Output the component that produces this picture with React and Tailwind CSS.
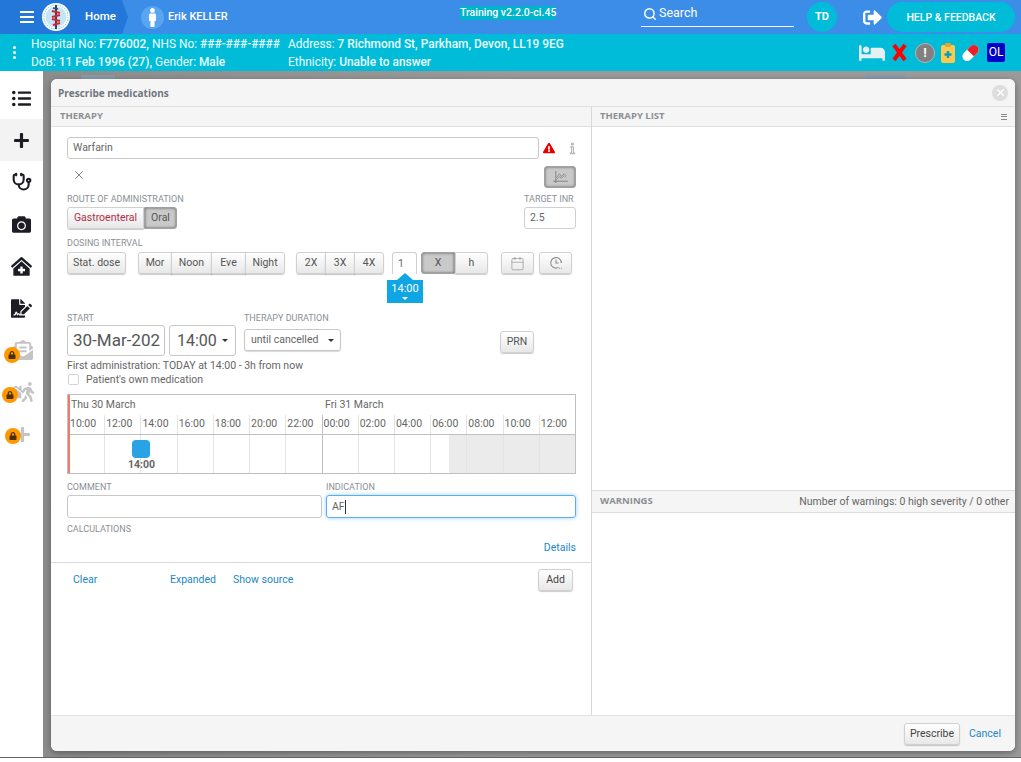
import { Calendar, Search, Stethoscope, X } from 'lucide-react';
import {
  FaBed,
  FaCamera,
  FaClinicMedical,
  FaEnvelopeOpenText,
  FaExclamationTriangle,
  FaFileSignature,
  FaHome,
  FaListUl,
  FaLock,
  FaMale,
  FaPlus,
  FaSignOutAlt,
  FaWalking,
} from 'react-icons/fa';

const hours = ['10:00', '12:00', '14:00', '16:00', '18:00', '20:00', '22:00', '00:00', '02:00', '04:00', '06:00', '08:00', '10:00', '12:00'];

function Label({ children, className = '' }) {
  return <div className={`whitespace-nowrap text-[9px] leading-[12px] text-[#8a8f96] ${className}`}>{children}</div>;
}

function Btn({ children, active, className = '' }) {
  const look = active
    ? 'bg-[#c9c9c9] border-[#a0a0a0] shadow-[inset_0_0_3px_rgba(0,0,0,0.55)]'
    : 'bg-gradient-to-b from-white to-[#e8e8e8] border-[#d0d0d0] shadow-[0_1px_1px_rgba(0,0,0,0.2)]';
  return (
    <div className={`flex h-[22px] items-center justify-center border text-[10.5px] text-[#555] ${look} ${className}`}>
      {children}
    </div>
  );
}

function Logo() {
  return (
    <svg viewBox="0 0 28 28" className="h-7 w-7 shrink-0">
      <circle cx="14" cy="14" r="14" fill="#fff" />
      <circle cx="14" cy="14" r="10.5" fill="#c5e6f5" />
      <circle cx="14" cy="14" r="12" fill="none" stroke="#7cc4e4" strokeWidth="1" strokeDasharray="1.5 1" />
      <rect x="13" y="2" width="2" height="24" fill="#27486e" />
      <path d="M10 8 L18 10 M18 12 L10 14 M10 16 L18 18 M18 20 L11 22" stroke="#d8232a" strokeWidth="2" fill="none" />
      <path d="M11 5 L16 6" stroke="#27486e" strokeWidth="1.5" />
    </svg>
  );
}

function Header() {
  return (
    <header className="flex h-[34px] shrink-0 items-center bg-[#3b8de8] font-['Roboto',sans-serif] text-white">
      <div className="flex h-full w-[128px] shrink-0 items-center bg-[#2377d8] pl-[20px] [clip-path:polygon(0_0,122px_0,128px_50%,122px_100%,0_100%)]">
        <div className="flex w-[14px] flex-col gap-[3px]">
          <span className="h-[2px] bg-white" />
          <span className="h-[2px] bg-white" />
          <span className="h-[2px] bg-white" />
        </div>
        <div className="ml-[8px]"><Logo /></div>
        <span className="ml-[15px] text-[11.5px] font-medium">Home</span>
      </div>
      <div className="ml-[13px] flex h-[23px] w-[23px] shrink-0 items-center justify-center rounded-full bg-[#5aa5f0]">
        <FaMale className="h-[19px] w-[19px]" />
      </div>
      <span className="ml-[4px] w-[292px] shrink-0 text-[11px] font-medium">Erik KELLER</span>
      <div className="mb-[8px] w-[95px] shrink-0">
        <span className="block h-[14px] whitespace-nowrap bg-[#00b4cc] text-[10.5px] font-medium leading-[14px]">Training v2.2.0-ci.45</span>
      </div>
      <div className="mb-[6px] ml-[86px] flex h-[25px] w-[153px] shrink-0 items-center border-b border-white pl-[2px]">
        <Search className="h-[14px] w-[14px]" strokeWidth={2.5} />
        <span className="ml-[2px] text-[12.5px]">Search</span>
      </div>
      <div className="ml-[13px] flex h-[30px] w-[30px] shrink-0 items-center justify-center rounded-full bg-[#00bcd9] text-[11px] font-bold">TD</div>
      <FaSignOutAlt className="ml-[26px] h-[19px] w-[19px] shrink-0" />
      <div className="ml-[5px] flex h-[30px] w-[128px] shrink-0 items-center justify-center rounded-full bg-[#00bcd9] pt-[1px] text-[10.5px] font-medium">HELP &amp; FEEDBACK</div>
    </header>
  );
}

function PatientBar() {
  return (
    <div className="flex h-[37px] shrink-0 items-center bg-[#00bcd9] font-['Roboto',sans-serif] text-[11.9px] leading-[18px] text-[#eafcff]">
      <div className="ml-[13px] flex w-[18px] shrink-0 flex-col gap-[2px]">
        <span className="h-[3px] w-[3px] rounded-full bg-white" />
        <span className="h-[3px] w-[3px] rounded-full bg-white" />
        <span className="h-[3px] w-[3px] rounded-full bg-white" />
      </div>
      <div className="w-[257px] shrink-0 whitespace-nowrap">
        <div>Hospital No: <b className="font-medium">F776002,</b> NHS No: <b className="font-medium">###-###-####</b></div>
        <div>DoB: <b className="font-medium">11 Feb 1996 (27),</b> Gender: <b className="font-medium">Male</b></div>
      </div>
      <div className="w-[571px] shrink-0 whitespace-nowrap">
        <div>Address: <b className="font-medium">7 Richmond St, Parkham, Devon, LL19 9EG</b></div>
        <div>Ethnicity: <b className="font-medium">Unable to answer</b></div>
      </div>
      <div className="flex items-center">
        <FaBed className="h-[24px] w-[26px] text-[#e6f0f7]" />
        <svg viewBox="0 0 15 17" className="ml-[7px] h-[17px] w-[15px]">
          <path d="M2 1 L13 16 M13 1 L2 16" stroke="#ff0000" strokeWidth="4" />
        </svg>
        <div className="ml-[8px] flex h-[20px] w-[20px] items-center justify-center rounded-full border border-[#b5b5b5] bg-[#808080] text-[13px] font-bold text-white">!</div>
        <svg viewBox="0 0 14 20" className="ml-[6px] h-[20px] w-[14px]">
          <rect x="0" y="2" width="14" height="18" rx="2" fill="#ffc94d" />
          <rect x="4" y="0" width="6" height="4" rx="1" fill="#e0a832" />
          <path d="M7 8 V15 M3.5 11.5 H10.5" stroke="#00a0c8" strokeWidth="2.4" />
        </svg>
        <svg viewBox="0 0 20 20" className="ml-[6px] h-[20px] w-[19px]">
          <g transform="rotate(-45 10 10)">
            <rect x="0" y="5" width="20" height="10" rx="5" fill="#fff" />
            <path d="M10 5 H15 A5 5 0 0 1 15 15 H10 Z" fill="#e8202a" />
          </g>
        </svg>
        <div className="mb-[1px] ml-[7px] flex h-[19px] w-[18px] items-center justify-center rounded-[2px] bg-[#0000c8] text-[12px] text-white">OL</div>
      </div>
    </div>
  );
}

function LockedIcon({ icon, lockClass }) {
  return (
    <div className="relative flex h-[42px] items-center justify-center text-[#c4c4c4]">
      {icon}
      <span className={`absolute flex h-[16px] w-[16px] items-center justify-center rounded-full bg-[#ff9800] text-[#4a3000] ${lockClass}`}>
        <FaLock className="h-[8px] w-[8px]" />
      </span>
    </div>
  );
}

function Sidebar() {
  const base = 'flex h-[42px] items-center justify-center text-[#1c1c24]';
  return (
    <nav className="flex w-[43px] shrink-0 flex-col bg-white pt-[6px]">
      <div className={base}><FaListUl className="h-[19px] w-[19px]" /></div>
      <div className={`${base} bg-[#f3f3f3]`}><FaPlus className="h-[17px] w-[17px]" /></div>
      <div className={base}><Stethoscope className="h-[20px] w-[20px]" strokeWidth={2.5} /></div>
      <div className={base}><FaCamera className="h-[19px] w-[19px]" /></div>
      <div className={base}><FaClinicMedical className="h-[19px] w-[21px]" /></div>
      <div className={base}><FaFileSignature className="h-[19px] w-[21px]" /></div>
      <LockedIcon icon={<FaEnvelopeOpenText className="ml-[2px] h-[20px] w-[20px]" />} lockClass="left-[4px] top-[18px]" />
      <LockedIcon
        icon={<span className="flex items-center"><FaHome className="h-[16px] w-[16px]" /><FaWalking className="-ml-[3px] h-[20px] w-[14px]" /></span>}
        lockClass="left-[2px] top-[16px]"
      />
      <LockedIcon icon={<FaPlus className="ml-[2px] h-[17px] w-[17px]" />} lockClass="left-[5px] top-[15px]" />
    </nav>
  );
}

function Timeline() {
  return (
    <div className="relative mt-[8px] h-[80px] w-[509px] border border-[#c0c0c0] text-[10.5px] text-[#666]">
      <div className="absolute bottom-0 left-0 top-0 w-[2px] bg-[#f07a6c]" />
      <div className="flex h-[20px] items-start pt-[1px]">
        <span className="w-[255px] pl-[3px] leading-[17px]">Thu 30 March</span>
        <span className="pl-[2px] leading-[17px]">Fri 31 March</span>
      </div>
      <div className="grid h-[20px] grid-cols-14 border-b border-[#c0c0c0]">
        {hours.map((h, i) => (
          <div key={i} className={`pl-[1px] leading-[18px] ${i === 0 ? 'pl-[2px]' : 'border-l'} ${i === 7 ? 'border-[#c0c0c0]' : 'border-[#e4e4e4]'}`}>{h}</div>
        ))}
      </div>
      <div className="grid h-[38px] grid-cols-14">
        {hours.map((h, i) => (
          <div key={i} className={`relative ${i === 0 ? '' : 'border-l'} ${i === 7 ? 'border-[#c0c0c0]' : 'border-[#e4e4e4]'} ${i > 10 ? 'bg-[#ebebeb]' : ''}`}>
            {i === 10 && <div className="absolute bottom-0 right-0 top-0 w-1/2 bg-[#ebebeb]" />}
            {i === 2 && (
              <>
                <div className="absolute -left-[9px] top-[5px] h-[18px] w-[18px] rounded-[4px] bg-[#29a3e6]" />
                <div className="absolute -left-[18px] top-[23px] w-[36px] text-center font-bold leading-[13px] text-[#666]">14:00</div>
              </>
            )}
          </div>
        ))}
      </div>
    </div>
  );
}

function TherapyForm() {
  return (
    <div className="flex w-[540px] shrink-0 flex-col">
      <div className="flex h-[20px] shrink-0 items-center border-b border-[#e0e0e0] bg-[#f5f5f5] pl-[9px] font-['Open_Sans',sans-serif] text-[9.5px] font-bold text-[#8a8f96]">THERAPY</div>
      <div className="flex-1 pl-[16px] pr-[15px] pt-[10px]">
        <div className="flex items-center">
          <div className="flex h-[22px] w-[472px] items-center rounded-[3px] border border-[#c8c8c8] pl-[5px] text-[10.5px] text-[#666]">Warfarin</div>
          <FaExclamationTriangle className="ml-[4px] h-[12px] w-[12px] text-[#e60000]" />
          <svg viewBox="0 0 8 14" className="ml-[14px] h-[13px] w-[7px]">
            <path d="M3 1 H5 V3 H3 Z M2 5 H5 V12 H6.5 V13 H1.5 V12 H3 V6 H2 Z" fill="none" stroke="#999" strokeWidth="0.9" />
          </svg>
        </div>
        <div className="mt-[7px] flex items-start justify-between">
          <X className="ml-[5px] mt-[2px] h-[14px] w-[14px] text-[#777]" strokeWidth={1.5} />
          <Btn active className="h-[22px] w-[32px] rounded-[3px]">
            <svg viewBox="0 0 16 14" className="h-[13px] w-[15px]" fill="none" stroke="#777" strokeWidth="0.9">
              <path d="M3 0 V13 M0 11 H16" />
              <path d="M4 7 L7 3 L9 6 L12 3 L14 5 M4 9 L7 6 L9 8 L12 5 L14 7" strokeWidth="0.7" />
            </svg>
          </Btn>
        </div>
        <div className="mt-[5px] flex justify-between">
          <div>
            <Label>ROUTE OF ADMINISTRATION</Label>
            <div className="mt-[2px] flex">
              <Btn className="w-[77px] rounded-l-[3px] !text-[#b0304a]">Gastroenteral</Btn>
              <Btn active className="w-[33px] rounded-r-[3px]">Oral</Btn>
            </div>
          </div>
          <div className="w-[52px]">
            <Label>TARGET INR</Label>
            <div className="mt-[2px] flex h-[22px] items-center rounded-[3px] border border-[#d0d0d0] pl-[5px] text-[10.5px] text-[#666]">2.5</div>
          </div>
        </div>
        <Label className="mt-[8px]">DOSING INTERVAL</Label>
        <div className="relative mt-[3px] flex items-center">
          <Btn className="w-[59px] rounded-[3px]">Stat. dose</Btn>
          <div className="ml-[12px] flex">
            <Btn className="w-[34px] rounded-l-[3px]">Mor</Btn>
            <Btn className="-ml-px w-[41px]">Noon</Btn>
            <Btn className="-ml-px w-[35px]">Eve</Btn>
            <Btn className="-ml-px w-[40px] rounded-r-[3px]">Night</Btn>
          </div>
          <div className="ml-[11px] flex">
            <Btn className="w-[30px] rounded-l-[3px]">2X</Btn>
            <Btn className="-ml-px w-[30px]">3X</Btn>
            <Btn className="-ml-px w-[30px] rounded-r-[3px]">4X</Btn>
          </div>
          <div className="ml-[8px] flex h-[22px] w-[25px] items-center rounded-t-[3px] border border-b-0 border-[#d0d0d0] pl-[5px] text-[10.5px] text-[#666]">1</div>
          <div className="ml-[4px] flex">
            <Btn active className="w-[34px] rounded-l-[3px]">X</Btn>
            <Btn className="w-[33px] rounded-r-[3px]">h</Btn>
          </div>
          <Btn className="ml-[13px] w-[33px] rounded-[3px]"><Calendar className="h-[15px] w-[15px] text-[#888]" strokeWidth={1} /></Btn>
          <Btn className="ml-[5px] w-[33px] rounded-[3px]">
            <svg viewBox="0 0 16 16" className="h-[14px] w-[14px]" fill="none" stroke="#888" strokeWidth="1.2">
              <path d="M11 13 A6 6 0 1 1 14 8" />
              <path d="M8 4 V8 H11" />
              <path d="M11.5 14 H12.5 M13.5 14 H14.5" />
            </svg>
          </Btn>
          {/* time bubble under the 1 field */}
          <div className="absolute left-[320px] top-[21px] flex h-[30px] w-[36px] flex-col items-center">
            <span className="h-0 w-0 border-x-[8px] border-b-[7px] border-x-transparent border-b-[#0fa6e3]" />
            <div className="flex h-[23px] w-[36px] flex-col items-center bg-[#0fa6e3] text-[11px] leading-[17px] text-white">
              14:00
              <span className="h-0 w-0 border-x-[3px] border-t-[3px] border-x-transparent border-t-white" />
            </div>
          </div>
        </div>
        <div className="mt-[38px] flex">
          <div>
            <Label>START</Label>
            <div className="mt-[1px] flex">
              <div className="flex h-[31px] w-[98px] items-center whitespace-nowrap rounded-[3px] border border-[#c8c8c8] pl-[5px] text-[17px] text-[#555]">30-Mar-202</div>
              <div className="ml-[4px] flex h-[31px] w-[67px] items-center rounded-[3px] border border-[#c8c8c8] pl-[7px] text-[16px] text-[#555]">
                14:00
                <span className="ml-[5px] h-0 w-0 border-x-[3px] border-t-[3px] border-x-transparent border-t-[#333]" />
              </div>
            </div>
          </div>
          <div className="ml-[8px]">
            <Label>THERAPY DURATION</Label>
            <div className="mt-[5px] flex h-[22px] w-[97px] items-center rounded-[3px] border border-[#c8c8c8] pl-[6px] text-[10.5px] text-[#666] shadow-[0_1px_1px_rgba(0,0,0,0.15)]">
              until cancelled
              <span className="ml-[10px] h-0 w-0 border-x-[3px] border-t-[3px] border-x-transparent border-t-[#333]" />
            </div>
          </div>
          <Btn className="ml-[159px] mt-[19px] w-[34px] rounded-[3px]">PRN</Btn>
        </div>
        <div className="mt-[3px] text-[10.5px] leading-[14px] text-[#666]">First administration: TODAY at 14:00 - 3h from now</div>
        <div className="flex items-center text-[10.5px] leading-[13px] text-[#666]">
          <span className="ml-[1px] h-[11px] w-[11px] rounded-[2px] border border-[#d4d4d4]" />
          <span className="ml-[7px]">Patient's own medication</span>
        </div>
        <Timeline />
        <div className="mt-[7px] flex gap-[4px]">
          <div className="w-[255px]">
            <Label>COMMENT</Label>
            <div className="mt-[2px] h-[23px] rounded-[3px] border border-[#c8c8c8]" />
          </div>
          <div className="w-[250px]">
            <Label>INDICATION</Label>
            <div className="mt-[2px] flex h-[23px] items-center rounded-[3px] border border-[#5aaef0] pl-[5px] text-[10.5px] text-[#666] shadow-[0_0_4px_rgba(90,174,240,0.6)]">
              AF<span className="h-[14px] w-px bg-[#333]" />
            </div>
          </div>
        </div>
        <Label className="mt-[5px]">CALCULATIONS</Label>
        <div className="mt-[6px] text-right text-[10.5px] leading-[14px] text-[#1b87c9]">Details</div>
      </div>
      <div className="flex h-[153px] shrink-0 items-start border-t border-[#dcdcdc] pl-[22px] pr-[18px] pt-[6px] text-[10.5px] text-[#1b87c9]">
        <span className="mt-[3px] w-[97px]">Clear</span>
        <span className="mt-[3px] w-[63px]">Expanded</span>
        <span className="mt-[3px]">Show source</span>
        <Btn className="ml-auto w-[35px] rounded-[3px] !text-[#444]">Add</Btn>
      </div>
    </div>
  );
}

function Modal() {
  return (
    <div className="relative flex h-[672px] flex-col overflow-hidden rounded-[6px] bg-white font-['Roboto',sans-serif] shadow-[0_2px_6px_rgba(0,0,0,0.35)]">
      <div className="flex h-[28px] shrink-0 items-center justify-between border-b border-[#e0e0e0] bg-[#f5f5f5] pl-[7px] pr-[7px]">
        <span className="pt-[1px] font-['Open_Sans',sans-serif] text-[10px] font-bold text-[#6f7680]">Prescribe medications</span>
        <span className="flex h-[16px] w-[16px] items-center justify-center rounded-full bg-[#dddddd]">
          <X className="h-[11px] w-[11px] text-white" strokeWidth={3} />
        </span>
      </div>
      <div className="flex min-h-0 flex-1">
        <TherapyForm />
        <div className="flex flex-1 flex-col border-l border-[#d8d8d8]">
          <div className="flex h-[20px] shrink-0 items-center justify-between border-b border-[#e0e0e0] bg-[#f5f5f5] pl-[8px] pr-[8px] font-['Open_Sans',sans-serif] text-[9.5px] font-bold text-[#8a8f96]">
            THERAPY LIST
            <span className="flex w-[6px] flex-col gap-[1.5px]">
              <span className="h-px bg-[#888]" />
              <span className="h-px bg-[#888]" />
              <span className="h-px bg-[#888]" />
            </span>
          </div>
          <div className="h-[363px] shrink-0" />
          <div className="flex h-[23px] shrink-0 items-center justify-between border-y border-[#dcdcdc] bg-[#f5f5f5] pl-[8px] pr-[6px]">
            <span className="font-['Open_Sans',sans-serif] text-[9.5px] font-bold text-[#8a8f96]">WARNINGS</span>
            <span className="text-[10.5px] text-[#666]">Number of warnings: 0 high severity / 0 other</span>
          </div>
        </div>
      </div>
      <div className="flex h-[36px] shrink-0 items-center justify-end border-t border-[#e4e4e4] bg-[#f5f5f5] pr-[15px] text-[10.5px]">
        <Btn className="w-[56px] rounded-[3px] !text-[#444]">Prescribe</Btn>
        <span className="ml-[9px] w-[31px] whitespace-nowrap text-[#1b87c9]">Cancel</span>
      </div>
    </div>
  );
}

export default function App() {
  return (
    <div className="flex h-[762px] w-[1021px] flex-col overflow-hidden bg-white">
      <Header />
      <PatientBar />
      <div className="flex min-h-0 flex-1">
        <Sidebar />
        <main className="relative flex-1 bg-gradient-to-r from-[#8c8c8c] via-[#9a9a9a] to-[#9a9a9a] pl-[8px] pr-[6px] pt-[8px]">
          <div className="absolute left-[38px] top-[4px] h-[4px] w-[34px] bg-[#8a9aa8]" />
          <div className="absolute left-[822px] top-[4px] h-[4px] w-[40px] bg-[#8a9aa8]" />
          <Modal />
        </main>
      </div>
      <div className="h-[5px] shrink-0 border-t border-[#666] bg-white" />
    </div>
  );
}
